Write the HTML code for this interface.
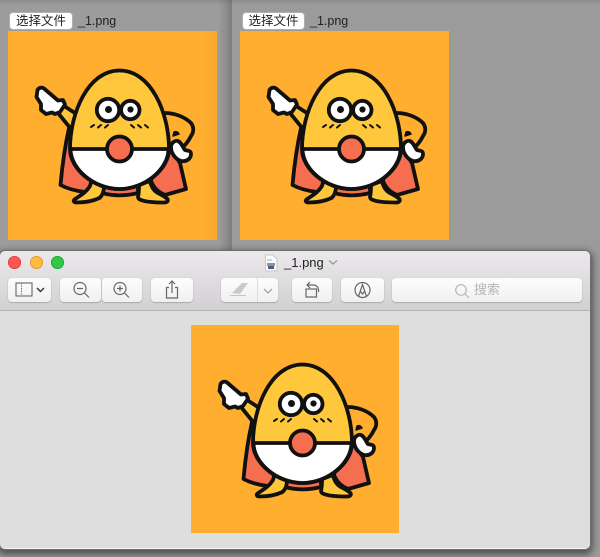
<!DOCTYPE html>
<html lang="zh"><head><meta charset="utf-8"><title>_1.png</title>
<style>
html,body{margin:0;padding:0}
body{width:600px;height:557px;overflow:hidden;position:relative;background:#9b9b9b;font-family:"Liberation Sans","Noto Sans CJK SC",sans-serif}
.a{position:absolute}
.sq{position:absolute;width:209px;height:209px;background:#ffae2f}
.file{position:absolute;top:12px;width:64px;height:18px;box-sizing:border-box;background:#fff;border:1px solid #b0b0b0;border-radius:4px;font-size:12.5px;line-height:16px;text-align:center;color:#222}
.fn{position:absolute;top:14px;font-size:12.5px;line-height:15px;color:#222}
.win{position:absolute;left:0;top:251px;width:590px;height:298px;background:#dedede;border-radius:5px;box-shadow:0 0 0 1px #6e6e6e,0 3px 7px 3px rgba(40,40,40,.6);overflow:hidden;border-bottom:1px solid #f6f6f6;box-sizing:border-box}
.bar{position:absolute;left:0;top:0;width:590px;height:59px;background:linear-gradient(#ebe9eb,#d2d0d2);border-bottom:1px solid #b6b4b6}
.dot{position:absolute;top:5px;width:13px;height:13px;border-radius:50%}
.btn{position:absolute;top:27px;height:24px;box-sizing:border-box;background:linear-gradient(#fdfdfd,#f1f0f1);border-radius:4px;box-shadow:0 1px 1px #aaa8aa,0 0 1px #bbb}
</style></head><body>
<svg width="0" height="0" style="position:absolute"><defs>
<g id="egg" stroke="#111" stroke-width="3.8" stroke-linejoin="round" stroke-linecap="round">
<path d="M61 97C57 115 54 137 52.500 154C60 158 68 160 77 161L96 150L85 115Z" fill="#f66e50"/>
<path d="M164 120L172 132L178 158L157 164C150 161 146 157 143 150L150 120Z" fill="#f66e50"/>
<path d="M94 152L130 152L130 162C118 165 105 165 94 162Z" fill="#f66e50"/>
<path d="M66.500 168.500C71 165 77 163 82 155L84 148L96 155C96 160 95 164 91.500 167C84 170.500 75 171.500 68.500 171.500C66 171.500 65 170 66.500 168.500Z" fill="#ffc83c"/>
<path d="M130 166C131 162 131 158 131 154L142 150C143 155 145 159 149 161.500C153 163.500 157 165.500 159.500 168C160.500 170 159 171.500 156 171.500C148 171.500 138 171 133 169C131 168.500 130 167 130 166Z" fill="#ffc83c"/>
<path d="M53 73L70 84L63 98L50 82Z" fill="#ffc83c"/>
<path d="M157 82C165 82 176 85 183 92C186 96 186 101 183 105C181 109 179 112 176 115" fill="none"/>
<path d="M166 101C168 100 170 101 171 103L165 105Z" fill="#111" stroke-width="1.500"/>
<path d="M111.500 39.500C80 39.500 62 82 62 118C62 138 86 158 111.500 158C137 158 161 138 161 118C161 82 143 39.500 111.500 39.500Z" fill="#ffc83c"/>
<path d="M62.500 118L160.500 118C160.500 138 137 158 111.500 158C86 158 62.500 138 62.500 118Z" fill="#fff"/>
<circle cx="111.500" cy="118" r="12.500" fill="#f66e50"/>
<circle cx="100" cy="79" r="11.200" fill="#fff"/>
<circle cx="122.300" cy="79" r="9.200" fill="#fff"/>
<circle cx="100.500" cy="78.500" r="3.500" fill="#111" stroke="none"/>
<circle cx="122.500" cy="78.500" r="3.100" fill="#111" stroke="none"/>
<path d="M83 96L86 94M90 96.500L93 94M97 96.500L100 94M123 94L126 96.500M130 94L133 96.500M137 94L140 96.500" fill="none" stroke-width="2"/>
<path d="M29.500 59C31 56.500 34 56 36 57.500L50 69.500L55 69L57 73.500L52 81L47 83L44 81.500L38 83L33 79L33 73L28.500 66Z" fill="#fff"/>
<path d="M163 116C163 112 167 109 170 110C174 112 175 117 177 119C179 120 183 119 183 123C183 128 178 131 173 130C167 128 163 122 163 116Z" fill="#fff"/>
</g>
</defs></svg>

<div class="a" style="left:0;top:0;width:232px;height:251px;background:linear-gradient(90deg,#9c9c9c 0,#9c9c9c 218px,#8e8e8e 226px,#7d7d7d 232px)"></div>
<div class="a" style="left:232px;top:0;width:368px;height:251px;background:#9b9b9b"></div>
<div class="a" style="left:0;top:0;width:600px;height:5px;background:linear-gradient(rgba(0,0,0,.1),rgba(0,0,0,0))"></div>

<div class="file" style="left:9px">选择文件</div><div class="fn" style="left:78px">_1.png</div>
<div class="sq" style="left:8px;top:31px;background:linear-gradient(90deg,#ffae2f 93%,#f8aa2e)"><svg width="209" height="209"><use href="#egg"/></svg></div>
<div class="file" style="left:242px;width:63px">选择文件</div><div class="fn" style="left:310px">_1.png</div>
<div class="sq" style="left:240px;top:31px"><svg width="209" height="209"><use href="#egg"/></svg></div>

<div class="win">
<div class="bar"></div>
<div class="dot" style="left:8px;background:#fc5753;box-shadow:inset 0 0 0 1px #e2463f"></div>
<div class="dot" style="left:30px;background:#fdbc40;box-shadow:inset 0 0 0 1px #dea034"></div>
<div class="dot" style="left:51px;background:#33c748;box-shadow:inset 0 0 0 1px #27aa35"></div>

<svg class="a" style="left:264px;top:3px" width="14" height="18"><path d="M1.500 1H9L13 5V17H1.500Z" fill="#fafafa" stroke="#c8c8c8"/><rect x="3" y="9" width="8" height="3" fill="#7f97bd"/><rect x="4" y="12" width="6" height="3" fill="#4d5d7c"/><path d="M3 6H8" stroke="#aaa"/></svg>
<div class="a" style="left:284px;top:4px;font-size:13px;line-height:16px;color:#222">_1.png</div>
<svg class="a" style="left:328px;top:8px" width="10" height="7"><path d="M1 1.500L5 5L9 1.500" fill="none" stroke="#9a9a9a" stroke-width="1.300"/></svg>

<div class="btn" style="left:8px;width:43px"><svg width="43" height="24" fill="none"><rect x="8" y="5" width="16" height="13" stroke="#666" stroke-width="1.100"/><path d="M13.500 5V18" stroke="#777" stroke-dasharray="1.500 1"/><path d="M29 10L32.500 13.500L36 10" stroke="#333" stroke-width="1.400"/></svg></div>
<div class="btn" style="left:60px;width:41px"><svg width="41" height="24" fill="none" stroke="#666" stroke-width="1.200"><circle cx="20" cy="10.500" r="6"/><path d="M17 10.500H23M24.500 15L29 19.500"/></svg></div>
<div class="btn" style="left:102px;width:40px"><svg width="40" height="24" fill="none" stroke="#666" stroke-width="1.200"><circle cx="18" cy="10.500" r="6"/><path d="M15 10.500H21M18 7.500V13.500M22.500 15L27 19.500"/></svg></div>
<div class="btn" style="left:151px;width:42px"><svg width="42" height="24" fill="none" stroke="#666" stroke-width="1.200"><path d="M18 9.500H15.500V20H26.500V9.500H24M21 15V3.500M18 6L21 3L24 6"/></svg></div>
<div class="btn" style="left:221px;width:57px"><svg width="57" height="24" fill="none"><path d="M11 15L21 5H27L19 16Z" fill="#c9c9c9"/><path d="M9 17.500H25" stroke="#c4c4c4"/><path d="M36.500 0V24" stroke="#dcdcdc"/><path d="M43 11L47 15L51 11" stroke="#a5a5a5" stroke-width="1.300"/></svg></div>
<div class="btn" style="left:292px;width:40px"><svg width="40" height="24" fill="none" stroke="#666" stroke-width="1.200"><rect x="14" y="11" width="10.500" height="8"/><path d="M15 7H21C25 7 27 10 26.500 14M18 4L15 7L18 10"/></svg></div>
<div class="btn" style="left:341px;width:43px"><svg width="43" height="24" fill="none" stroke="#666" stroke-width="1.200"><circle cx="21.500" cy="12" r="7.500"/><path d="M17.500 18.500L21.500 6.500L25.500 18.500M19.500 13.500L21.500 16L23.500 13.500"/></svg></div>
<div class="btn" style="left:392px;width:190px"><svg class="a" style="left:62px;top:5px" width="16" height="16" fill="none" stroke="#b5b5b5" stroke-width="1.200"><circle cx="7" cy="7" r="5.300"/><path d="M11 11L15 15"/></svg><div class="a" style="left:82px;top:4px;font-size:13px;line-height:16px;color:#b5b5b5">搜索</div></div>

<div class="a" style="left:191px;top:74px;width:208px;height:208px;background:#ffae2f"><svg width="208" height="208"><use href="#egg"/></svg></div>
</div>
</body></html>
